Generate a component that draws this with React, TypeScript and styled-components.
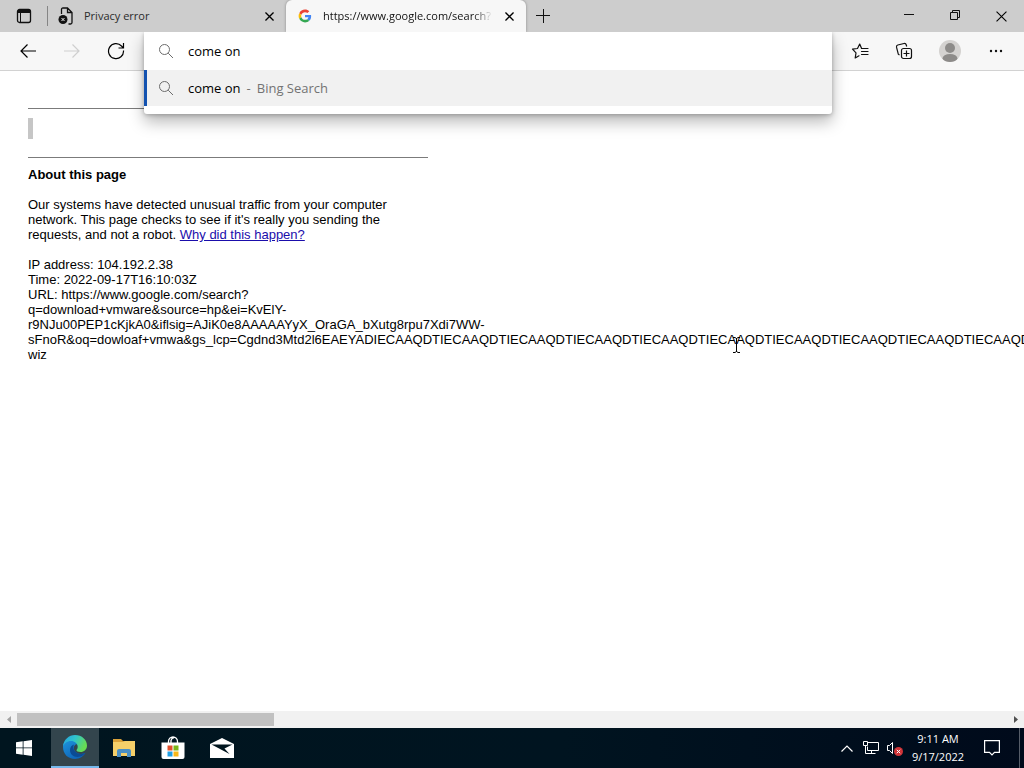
import React, { useState } from 'react';
import styled, { createGlobalStyle } from 'styled-components';

const uiFont = `'Segoe UI', 'Open Sans', 'Noto Sans', sans-serif`;
const pageFont = `Arial, 'Liberation Sans', sans-serif`;

const GlobalStyle = createGlobalStyle`
  *, *::before, *::after { box-sizing: border-box; }
  body { margin: 0; background: #fff; color: #000; font-family: ${uiFont}; }
  button, input { font: inherit; color: inherit; }
`;

const Screen = styled.div`
  display: flex;
  flex-direction: column;
  min-height: 100vh;
  overflow: hidden;
`;

/* Tab strip */
const TabStrip = styled.header`
  display: flex;
  height: 32px;
  background: #cdcdcd;
`;

const IconButton = styled.button<{ $width?: number }>`
  display: flex;
  flex: none;
  align-items: center;
  justify-content: center;
  width: ${(p) => p.$width ?? 44}px;
  height: 100%;
  padding: 0;
  border: 0;
  background: none;
  &:disabled { color: #cfcfcf; }
  svg { display: block; }
`;

const Divider = styled.span`
  width: 1px;
  height: 20px;
  margin-top: 6px;
  background: #858585;
`;

const Tab = styled.div<{ $active?: boolean }>`
  display: flex;
  align-items: center;
  flex: 0 1 ${(p) => (p.$active ? 240 : 238)}px;
  min-width: 0;
  padding: 0 9px 0 ${(p) => (p.$active ? 11 : 10)}px;
  border-radius: 6px 6px 0 0;
  background: ${(p) => (p.$active ? '#f7f7f7' : 'transparent')};
  box-shadow: ${(p) => (p.$active ? '0 0 3px rgba(0, 0, 0, 0.35)' : 'none')};
  font-size: 11px;
`;

const TabTitle = styled.span<{ $faded?: boolean }>`
  flex: 1;
  min-width: 0;
  margin: 0 8px 0 10px;
  overflow: hidden;
  white-space: nowrap;
  line-height: 18px;
  color: ${(p) => (p.$faded ? '#111' : '#2b2b2b')};
  mask-image: ${(p) =>
    p.$faded ? 'linear-gradient(to right, #000 calc(100% - 20px), transparent)' : 'none'};
`;

const WindowControls = styled.div`
  display: flex;
  margin-left: auto;
`;

/* Toolbar */
const Toolbar = styled.div`
  position: relative;
  z-index: 1;
  display: flex;
  height: 39px;
  padding-left: 6px;
  background: #f7f7f7;
  border-bottom: 1px solid #d2d2d2;
`;

const AddressSlot = styled.div`
  position: relative;
  flex: 1;
  margin-left: 6px;
`;

const AddressPopup = styled.form`
  position: absolute;
  inset: 0 0 auto;
  padding-bottom: 8px;
  background: #fff;
  border-radius: 0 0 3px 3px;
  box-shadow: 0 8px 16px rgba(0, 0, 0, 0.28), 0 1px 4px rgba(0, 0, 0, 0.25);
  clip-path: inset(0 -30px -40px -30px);
  font-size: 13px;
`;

const AddressRow = styled.label`
  display: flex;
  align-items: center;
  gap: 14px;
  height: 38px;
  padding-left: 14px;
`;

const AddressInput = styled.input`
  flex: 1;
  min-width: 0;
  padding: 0;
  border: 0;
  outline: 0;
  background: none;
`;

const Suggestion = styled.button`
  display: flex;
  align-items: center;
  gap: 14px;
  width: 100%;
  height: 36px;
  padding: 0 0 0 11px;
  border: 0;
  border-left: 3px solid #1352b0;
  background: #f1f1f1;
  text-align: left;
`;

const SuggestionText = styled.span`
  display: flex;
  gap: 6px;
`;

const Source = styled.span`
  color: #737373;
`;

const ToolbarActions = styled.div`
  display: flex;
  width: 192px;
  padding-left: 6px;
`;

/* Web page */
const PageView = styled.main`
  position: relative;
  flex: 1;
  overflow: hidden;
  padding: 37px 28px 0;
  font-family: ${pageFont};
  font-size: 13px;
  line-height: 15px;
`;

const Article = styled.article`
  width: 400px;
`;

const Rule = styled.hr`
  height: 1px;
  margin: 0;
  border: 0;
  background: #7b7b7b;
`;

const Placeholder = styled.div`
  width: 5px;
  height: 21px;
  margin: 9px 0 18px;
  background: #c6c6c6;
`;

const Heading = styled.h1`
  margin: 9px 0 15px;
  font-size: inherit;
  font-weight: bold;
`;

const Paragraph = styled.p`
  margin: 0 0 15px;
`;

const PageLink = styled.a`
  color: #1a0dab;
`;

const Pointer = styled.svg`
  position: absolute;
  left: 731px;
  top: 266px;
`;

const ScrollBar = styled.div`
  display: flex;
  height: 17px;
  background: #f1f1f1;
`;

const ScrollTrack = styled.div`
  flex: 1;
  padding: 2px 0;
`;

const ScrollThumb = styled.div`
  width: 26%;
  height: 13px;
  background: #c1c1c1;
`;

/* Taskbar */
const Taskbar = styled.footer`
  display: flex;
  height: 40px;
  background: linear-gradient(to right, #00151f, #001420 55%, #000a1b);
  color: #fff;
`;

const TaskButton = styled(IconButton)<{ $active?: boolean }>`
  background: ${(p) => (p.$active ? '#33454d' : 'none')};
  border-bottom: ${(p) => (p.$active ? '2px solid #76b9ed' : '0')};
`;

const TaskApps = styled.nav`
  display: flex;
  margin-left: 3px;
`;

const Tray = styled.div`
  display: flex;
  margin-left: auto;
  margin-right: 4px;
  padding-right: 4px;
  border-right: 1px solid #565d69;
`;

const Clock = styled.time`
  display: flex;
  flex-direction: column;
  justify-content: center;
  width: 62px;
  text-align: center;
  font-size: 11px;
  line-height: 18px;
`;

const SearchIcon = () => (
  <svg width="16" height="16" viewBox="0 0 16 16" fill="none" stroke="#6c6c6c" aria-hidden="true">
    <circle cx="6.5" cy="6.5" r="5" />
    <path d="M10.2 10.2 15 15" />
  </svg>
);

const CloseIcon = ({ size = 9, weight = 1.5 }: { size?: number; weight?: number }) => (
  <svg width={size} height={size} viewBox="0 0 10 10" stroke="currentColor" strokeWidth={weight} aria-hidden="true">
    <path d="M.5.5l9 9M9.5.5l-9 9" />
  </svg>
);

const ErrorPageIcon = () => (
  <svg width="16" height="18" viewBox="0 0 16 18" fill="none" stroke="#111" strokeWidth="1.3" aria-hidden="true">
    <path d="M3.5 7V2.5Q3.5 1 5 1H9.5L14 5.500V15.500Q14 17 12.500 17H10.500M9.500 1V5.500H14" />
    <circle cx="5" cy="12.500" r="4.500" fill="#111" stroke="none" />
    <path d="M3.500 11l3 3M6.500 11l-3 3" stroke="#eee" strokeWidth="1" />
  </svg>
);

const GoogleIcon = () => (
  <svg width="16" height="16" viewBox="0 0 48 48" aria-hidden="true">
    <g transform="translate(4.800 4.800) scale(.8)">
      <path fill="#EA4335" d="M24 9.500c3.540 0 6.710 1.220 9.210 3.600l6.850-6.850C35.900 2.380 30.470 0 24 0 14.620 0 6.510 5.380 2.560 13.220l7.980 6.190C12.430 13.720 17.740 9.500 24 9.500z" />
      <path fill="#4285F4" d="M46.980 24.550c0-1.570-.15-3.090-.38-4.550H24v9.020h12.940c-.58 2.960-2.260 5.480-4.780 7.180l7.730 6c4.510-4.180 7.090-10.360 7.090-17.650z" />
      <path fill="#FBBC05" d="M10.530 28.590c-.48-1.450-.76-2.990-.76-4.590s.27-3.140.76-4.590l-7.980-6.190C.92 16.460 0 20.120 0 24c0 3.880.92 7.540 2.560 10.780l7.970-6.190z" />
      <path fill="#34A853" d="M24 48c6.480 0 11.930-2.130 15.890-5.810l-7.730-6c-2.150 1.450-4.920 2.300-8.160 2.300-6.260 0-11.570-4.220-13.470-9.910l-7.980 6.190C6.510 42.620 14.620 48 24 48z" />
    </g>
  </svg>
);

const EdgeIcon = () => (
  <svg width="26" height="26" viewBox="0 0 26 26" aria-hidden="true">
    <defs>
      <linearGradient id="edgeTop" x1="0" y1="0" x2="1" y2=".4">
        <stop offset="0" stopColor="#249fe0" />
        <stop offset=".5" stopColor="#30c4cc" />
        <stop offset="1" stopColor="#67dc53" />
      </linearGradient>
      <linearGradient id="edgeBody" x1="0" y1="0" x2=".7" y2="1">
        <stop offset="0" stopColor="#1e94dc" />
        <stop offset="1" stopColor="#0d61b5" />
      </linearGradient>
    </defs>
    <path fill="url(#edgeBody)" d="M1 13C1 8 5 6 9 6c5 0 8 3 8 6-1-2-3-2-4-1-3 3 0 9 6 9 2 0 3-.5 4.500-1.200C21.500 22.500 17.500 25 13 25 6 25 1 20 1 13z" />
    <path fill="#0b4b94" d="M8 16c0-3 2-5 4-5.500-2 4 1 9.500 7 9.500 2 0 3.300-.6 4.500-1.200C22 21 19 23 15.500 23 11 23 8 20 8 16z" />
    <path fill="url(#edgeTop)" d="M1 12.500C1.500 5.500 7 1 13 1c7 0 12 5 12 10.500 0 4-3 6.500-6.500 6.500-2.500 0-4-.8-4-1.700 0-.7 1.200-1.300 1.200-3.500 0-3.300-3-5.800-6.700-5.800-4 0-7 2.500-8 5.500z" />
  </svg>
);

const FolderIcon = () => (
  <svg width="22" height="20" viewBox="0 0 22 20" aria-hidden="true">
    <path fill="#dba23a" d="M0 1h8l2 2h11v5H0z" />
    <path fill="#f5cf69" d="M0 4h10l2-1h10v15H0z" />
    <path fill="#4a8fc4" d="M4 19v-6q0-2 2-2h10q2 0 2 2v6h-4v-4H8v4z" />
  </svg>
);

const StoreIcon = () => (
  <svg width="24" height="24" viewBox="0 0 24 24" aria-hidden="true">
    <path fill="none" stroke="#fff" strokeWidth="1.300" d="M7.500 8V5.500a4.500 4.500 0 0 1 9 0V8M10 7V4.500Q10.500 2 13 1.500" />
    <path fill="#fff" d="M.5 6.500h23V21q0 2-2 2h-19q-2 0-2-2z" />
    <path fill="#e04f2b" d="M6.500 9.500h5v5h-5z" />
    <path fill="#7bb518" d="M12.500 9.500h5v5h-5z" />
    <path fill="#209fe4" d="M6.500 15.500h5v5h-5z" />
    <path fill="#f8b718" d="M12.500 15.500h5v5h-5z" />
  </svg>
);

const addressLine =
  'https://www.google.com/search?q=download+vmware&source=hp&ei=KvElY-r9NJu00PEP1cKjkA0&iflsig=AJiK0e8AAAAAYyX_OraGA_bXutg8rpu7Xdi7WW-sFnoR&oq=dowloaf+vmwa&gs_lcp=Cgdnd3Mtd2l6EAEYAD' +
  'IECAAQDT'.repeat(11) +
  '-wiz';

export default function App() {
  const [query, setQuery] = useState('come on');

  return (
    <>
      <GlobalStyle />
      <Screen>
        <TabStrip>
          <IconButton $width={47} aria-label="Tab actions">
            <svg width="16" height="16" viewBox="0 0 16 16" fill="none" stroke="#111" strokeWidth="1.3">
              <rect x="1.500" y="1.500" width="13" height="13" rx="2" />
              <path d="M2 3.500h12" strokeWidth="3" />
              <path d="M4.500 5v9" strokeWidth="1" />
            </svg>
          </IconButton>
          <Divider />
          <Tab>
            <ErrorPageIcon />
            <TabTitle>Privacy error</TabTitle>
            <IconButton $width={16} aria-label="Close tab">
              <CloseIcon />
            </IconButton>
          </Tab>
          <Tab $active>
            <GoogleIcon />
            <TabTitle $faded>https://www.google.com/search?</TabTitle>
            <IconButton $width={16} aria-label="Close tab">
              <CloseIcon />
            </IconButton>
          </Tab>
          <IconButton $width={34} aria-label="New tab">
            <svg width="14" height="14" viewBox="0 0 14 14" stroke="#111" strokeWidth="1">
              <path d="M7.500 0v14M0 6.500h14" />
            </svg>
          </IconButton>
          <WindowControls>
            <IconButton $width={46} aria-label="Minimize">
              <svg width="10" height="10" viewBox="0 0 10 10" stroke="#111">
                <path d="M0 3.500h10" />
              </svg>
            </IconButton>
            <IconButton $width={46} aria-label="Restore">
              <svg width="10" height="12" viewBox="0 0 10 12" fill="none" stroke="#111">
                <path d="M.5 2.500h7v7h-7zM2.500 2V.5h7v7H8" />
              </svg>
            </IconButton>
            <IconButton $width={46} aria-label="Close">
              <CloseIcon size={11} weight={1} />
            </IconButton>
          </WindowControls>
        </TabStrip>

        <Toolbar>
          <IconButton aria-label="Back">
            <svg width="16" height="14" viewBox="0 0 16 14" fill="none" stroke="currentColor" strokeWidth="1.200">
              <path d="M16 7H1M7.500.5 1 7l6.500 6.500" />
            </svg>
          </IconButton>
          <IconButton aria-label="Forward" disabled>
            <svg width="16" height="14" viewBox="0 0 16 14" fill="none" stroke="currentColor" strokeWidth="1.200">
              <path d="M0 7h15M8.500.5 15 7l-6.500 6.500" />
            </svg>
          </IconButton>
          <IconButton aria-label="Refresh">
            <svg width="18" height="18" viewBox="0 0 18 18" fill="none" stroke="currentColor" strokeWidth="1.200">
              <path d="M16.500 8.500A7.500 7.500 0 1 1 14.500 4L16 5.500M16.500 1v5h-5" />
            </svg>
          </IconButton>
          <AddressSlot>
            <AddressPopup onSubmit={(e) => e.preventDefault()}>
              <AddressRow>
                <SearchIcon />
                <AddressInput
                  aria-label="Address and search"
                  value={query}
                  onChange={(e) => setQuery(e.target.value)}
                />
              </AddressRow>
              <Suggestion type="button">
                <SearchIcon />
                <SuggestionText>
                  <span>come on</span>
                  <Source>-</Source>
                  <Source>Bing Search</Source>
                </SuggestionText>
              </Suggestion>
            </AddressPopup>
          </AddressSlot>
          <ToolbarActions>
            <IconButton aria-label="Favorites">
              <svg width="18" height="18" viewBox="0 0 18 18" fill="none" stroke="#111" strokeWidth="1.200" strokeLinejoin="round" strokeLinecap="round">
                <path d="M10.500 6.200 8.700 2 6.500 6.500 1.500 7.200 5 10.800 4.200 16 8 13.800M10.500 6.500h6.500M10.500 9.500H17M10.500 12.500H17" />
              </svg>
            </IconButton>
            <IconButton aria-label="Collections">
              <svg width="18" height="18" viewBox="0 0 18 18" fill="none" stroke="#111" strokeWidth="1.200">
                <rect x="6.500" y="6.500" width="10" height="10" rx="2" />
                <path d="M11.500 8.500v6M8.500 11.500h6M4.500 13 3.300 12.200 1.500 5.200Q1.200 3.500 2.800 3L9 1.500Q10.800 1.200 11.300 3L11.700 4.500" />
              </svg>
            </IconButton>
            <IconButton $width={48} aria-label="Profile">
              <svg width="22" height="22" viewBox="0 0 22 22">
                <clipPath id="avatarClip">
                  <circle cx="11" cy="11" r="11" />
                </clipPath>
                <g clipPath="url(#avatarClip)">
                  <path fill="#d4d2d0" d="M0 0h22v22H0z" />
                  <circle cx="11" cy="8" r="5" fill="#8d8b89" />
                  <ellipse cx="11" cy="18.500" rx="7.500" ry="4.500" fill="#8d8b89" />
                </g>
              </svg>
            </IconButton>
            <IconButton aria-label="Settings and more">
              <svg width="14" height="4" viewBox="0 0 14 4" fill="#111">
                <circle cx="2" cy="2" r="1.200" />
                <circle cx="7" cy="2" r="1.200" />
                <circle cx="12" cy="2" r="1.200" />
              </svg>
            </IconButton>
          </ToolbarActions>
        </Toolbar>

        <PageView>
          <Article>
            <Rule />
            <Placeholder />
            <Rule />
            <Heading>About this page</Heading>
            <Paragraph>
              Our systems have detected unusual traffic from your computer network. This page checks to
              see if it's really you sending the requests, and not a robot.{' '}
              <PageLink href="#why">Why did this happen?</PageLink>
            </Paragraph>
            <Paragraph>
              IP address: 104.192.2.38
              <br />
              Time: 2022-09-17T16:10:03Z
              <br />
              URL: {addressLine}
            </Paragraph>
          </Article>
          <Pointer width="10" height="16" viewBox="0 0 10 16" fill="none" stroke="#000" aria-hidden="true">
            <path d="M2 .5h2l1.500 1L7 .5h2M5.500 1v14M2 15.500h2l1.500-1 1.500 1h2" />
          </Pointer>
        </PageView>

        <ScrollBar>
          <IconButton $width={17} aria-label="Scroll left">
            <svg width="4" height="7" viewBox="0 0 4 7" fill="#a3a3a3">
              <path d="M4 0v7L0 3.500z" />
            </svg>
          </IconButton>
          <ScrollTrack>
            <ScrollThumb />
          </ScrollTrack>
          <IconButton $width={17} aria-label="Scroll right">
            <svg width="4" height="7" viewBox="0 0 4 7" fill="#505050">
              <path d="M0 0v7l4-3.500z" />
            </svg>
          </IconButton>
        </ScrollBar>

        <Taskbar>
          <TaskButton $width={48} aria-label="Start">
            <svg width="16" height="16" viewBox="0 0 16 16" fill="#fff">
              <path d="M0 2.300 6.700 1.300V7.500H0zM7.500 1.200 16 0v7.500H7.500zM0 8.300h6.700v6.400L0 13.700zM7.500 8.300H16V16l-8.500-1.200z" />
            </svg>
          </TaskButton>
          <TaskApps aria-label="Pinned apps">
            <TaskButton $width={48} $active aria-label="Microsoft Edge">
              <EdgeIcon />
            </TaskButton>
            <TaskButton $width={49} aria-label="File Explorer">
              <FolderIcon />
            </TaskButton>
            <TaskButton $width={49} aria-label="Microsoft Store">
              <StoreIcon />
            </TaskButton>
            <TaskButton $width={49} aria-label="Mail">
              <svg width="24" height="20" viewBox="0 0 24 20">
                <path fill="#fff" d="M0 6 12 0l12 6v14H0z" />
                <path fill="#00151f" d="M1.500 6.500h21L14.500 10.500 19.500 16 10.500 11.300z" />
              </svg>
            </TaskButton>
          </TaskApps>
          <Tray>
            <TaskButton $width={24} aria-label="Show hidden icons">
              <svg width="12" height="7" viewBox="0 0 12 7" fill="none" stroke="#fff" strokeWidth="1.200">
                <path d="M.5 6.500 6 1l5.500 5.500" />
              </svg>
            </TaskButton>
            <TaskButton $width={24} aria-label="Network">
              <svg width="16" height="14" viewBox="0 0 16 14" fill="none" stroke="#fff">
                <path d="M4.500 1.500h11v8h-11v-4M.5.500h4v4h-4zM2.500 4.500v8h10M8.500 9.500v3" />
              </svg>
            </TaskButton>
            <TaskButton $width={24} aria-label="Volume muted">
              <svg width="16" height="16" viewBox="0 0 16 16" fill="none" stroke="#fff">
                <path d="M.5 5.500h2l3-3v11l-3-3h-2z" />
                <circle cx="11.500" cy="11.500" r="4.500" fill="#d13438" stroke="none" />
                <path d="m9.800 9.800 3.400 3.400m0-3.400-3.400 3.400" />
              </svg>
            </TaskButton>
            <Clock dateTime="2022-09-17T09:11">
              <span>9:11 AM</span>
              <span>9/17/2022</span>
            </Clock>
            <TaskButton $width={46} aria-label="Notifications">
              <svg width="16" height="16" viewBox="0 0 16 16" fill="none" stroke="#fff" strokeWidth="1.200">
                <path d="M.6.600h14.800v11.800h-4.900L8 15l-2.500-2.600H.6z" />
              </svg>
            </TaskButton>
          </Tray>
        </Taskbar>
      </Screen>
    </>
  );
}
